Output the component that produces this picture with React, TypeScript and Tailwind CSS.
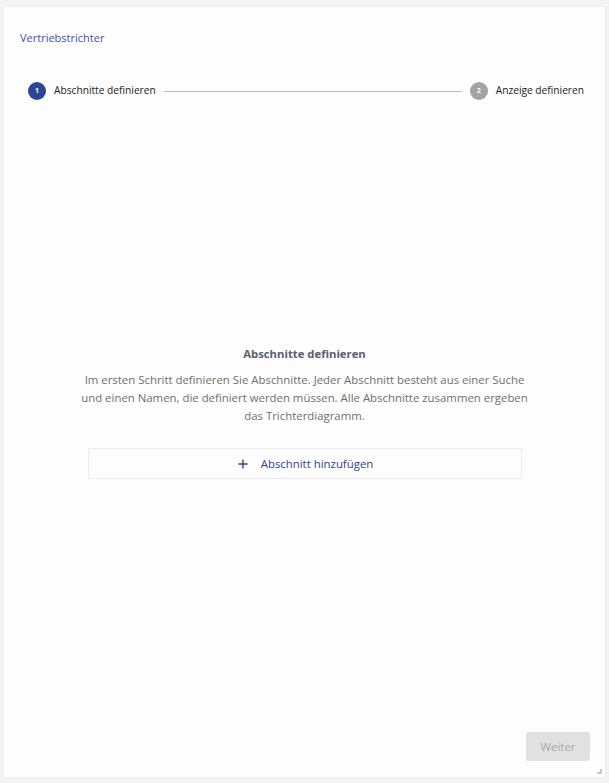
import { Plus } from "lucide-react";

function StepDot({ n, active }: { n: number; active?: boolean }) {
  return (
    <span
      className={
        active
          ? "flex h-[18px] w-[18px] shrink-0 items-center justify-center rounded-full bg-[#2d4593] text-[7px] font-bold text-white"
          : "flex h-[18px] w-[18px] shrink-0 items-center justify-center rounded-full bg-[#a3a3a3] text-[7px] font-bold text-white"
      }
    >
      {n}
    </span>
  );
}

export default function App() {
  return (
    <div className="h-[783px] w-full bg-[#f3f3f3] px-[4px] pt-[7px] pb-[6px] font-['Segoe_UI','Open_Sans',sans-serif]">
      <div className="relative flex h-full flex-col bg-[#fdfdfd] shadow-[0_0_2px_rgba(0,0,0,0.06)]">
        <div className="px-4 pt-[22px] text-[11px] leading-[18px] text-[#3b52a8]">Vertriebstrichter</div>

        {/* stepper */}
        <div className="mt-[35px] flex items-center pl-6 pr-[21px]">
          <StepDot n={1} active />
          <span className="ml-[8px] text-[10.2px] text-[#222]">Abschnitte definieren</span>
          <span className="mx-[8px] h-px flex-1 bg-[#bdbdbd]" />
          <StepDot n={2} />
          <span className="ml-[8px] text-[10.2px] text-[#222]">Anzeige definieren</span>
        </div>

        <div className="flex flex-1 flex-col items-center justify-center pb-[8px]">
          <h2 className="text-[11.3px] font-bold leading-[18px] text-[#5b606e]">Abschnitte definieren</h2>
          <p className="mt-[8px] w-[450px] text-center text-[11.4px] leading-[18px] text-[#6f6f6f]">
            Im ersten Schritt definieren Sie Abschnitte. Jeder Abschnitt besteht aus einer Suche und einen
            Namen, die definiert werden müssen. Alle Abschnitte zusammen ergeben das Trichterdiagramm.
          </p>
          <button className="mt-[23px] flex h-[31px] w-[434px] items-center justify-center gap-[11px] border border-[#ececec] bg-[#fdfdfd] text-[11.4px] text-[#2d4593]">
            <Plus size={14} strokeWidth={2.4} />
            <span>Abschnitt hinzufügen</span>
          </button>
        </div>

        <div className="flex justify-end px-[15px] pb-[16px]">
          <button className="h-[29px] w-[64px] rounded-[3px] bg-[#e1e1e1] text-[11.4px] text-[#a7a7a7]">Weiter</button>
        </div>

        {/* resize grip */}
        <span className="absolute right-[3px] bottom-[3px] h-[5px] w-[5px] border-r-2 border-b-2 border-[#c8c8c8]" />
      </div>
    </div>
  );
}
